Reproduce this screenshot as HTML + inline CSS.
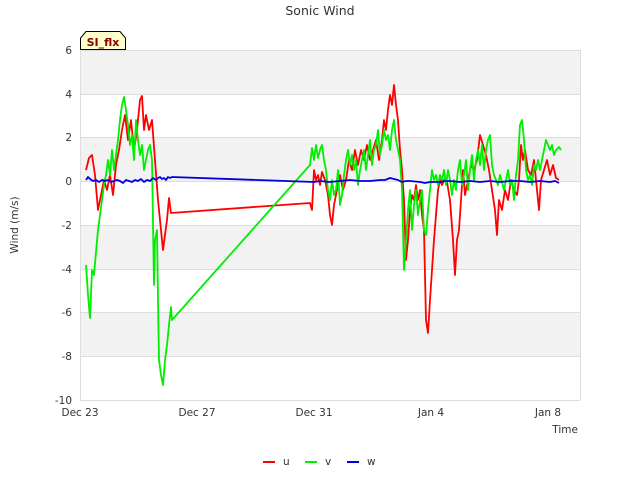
<!DOCTYPE html>
<html><head><meta charset="utf-8"><style>
body{margin:0;background:#fff;}
svg{display:block;font-family:"DejaVu Sans","Liberation Sans",sans-serif;}
</style></head><body>
<svg width="640" height="480" viewBox="0 0 640 480">
<rect width="640" height="480" fill="#fff"/>
<text x="320" y="15" font-size="12.5" fill="#333" text-anchor="middle">Sonic Wind</text>
<g>
<rect x="80" y="50" width="500" height="44" fill="#f2f2f2"/>
<rect x="80" y="137" width="500" height="44" fill="#f2f2f2"/>
<rect x="80" y="225" width="500" height="44" fill="#f2f2f2"/>
<rect x="80" y="312" width="500" height="44" fill="#f2f2f2"/>
</g>
<g stroke="#ddd" stroke-width="1">
<line x1="80" y1="50.5" x2="580" y2="50.5"/><line x1="80" y1="94.5" x2="580" y2="94.5"/>
<line x1="80" y1="137.5" x2="580" y2="137.5"/><line x1="80" y1="181.5" x2="580" y2="181.5"/>
<line x1="80" y1="225.5" x2="580" y2="225.5"/><line x1="80" y1="269.5" x2="580" y2="269.5"/>
<line x1="80" y1="312.5" x2="580" y2="312.5"/><line x1="80" y1="356.5" x2="580" y2="356.5"/>
<line x1="80.5" y1="50" x2="80.5" y2="400"/><line x1="580.5" y1="50" x2="580.5" y2="400"/>
<line x1="80" y1="400.5" x2="580" y2="400.5"/>
</g>
<g font-size="10.5" fill="#333" text-anchor="end">
<text x="72" y="54">6</text><text x="72" y="98">4</text><text x="72" y="141">2</text>
<text x="72" y="185">0</text><text x="72" y="229">-2</text><text x="72" y="273">-4</text>
<text x="72" y="316">-6</text><text x="72" y="360">-8</text><text x="72" y="404">-10</text>
</g>
<g font-size="10.5" fill="#333" text-anchor="middle">
<text x="80" y="416">Dec 23</text><text x="197" y="416">Dec 27</text><text x="314" y="416">Dec 31</text>
<text x="431" y="416">Jan 4</text><text x="548" y="416">Jan 8</text>
</g>
<text x="578" y="433" font-size="10.5" fill="#333" text-anchor="end">Time</text>
<text x="18" y="225" font-size="10.5" fill="#333" text-anchor="middle" transform="rotate(-90 18 225)">Wind (m/s)</text>
<g fill="none" stroke-width="1.8" stroke-linejoin="round">
<polyline stroke="#ff0000" points="86,170 89,158 92,155 95,175 98,210 101,195 104,180 107,190 110,175 113,195 116,165 119,150 122,130 125,115 128,140 131,120 134,150 137,130 140,100 142,96 144,130 146,115 149,130 152,120 155,160 158,200 161,230 163,250 165,235 167,220 169,198 171,213 310,203 312,210 314,170 316,180 318,175 320,185 322,172 325,180 328,195 330,215 332,225 334,205 337,190 340,175 343,190 346,180 349,160 352,170 355,150 358,165 361,150 364,160 367,145 370,160 373,150 376,140 379,160 382,140 384,120 386,130 388,110 390,95 392,105 394,85 396,105 398,120 400,150 402,170 404,200 406,260 408,240 410,210 412,195 414,200 416,185 418,200 420,190 422,215 424,230 426,320 428,333 430,300 432,270 434,240 436,215 438,190 440,180 442,185 444,180 447,182 450,200 453,240 455,275 457,240 459,230 461,200 463,170 465,195 468,180 471,165 474,170 477,160 480,135 483,145 486,155 489,170 492,190 495,210 497,235 499,200 502,210 505,190 508,200 511,180 514,190 517,195 519,180 521,145 523,160 525,150 528,170 531,175 534,160 537,190 539,210 541,180 544,170 547,160 550,175 553,165 556,178 559,180"/>
<polyline stroke="#00ee00" points="86,265 88,295 90,318 92,270 94,275 96,252 98,230 100,215 102,200 104,185 106,175 108,160 110,175 112,150 114,170 116,155 118,140 120,120 122,105 124,97 126,110 128,125 130,145 132,135 134,160 136,120 138,140 140,155 142,145 144,170 146,160 148,150 150,145 152,160 154,285 155,240 157,230 158,300 159,360 161,375 163,385 165,360 167,345 169,325 171,307 172,320 310,165 312,148 314,160 316,145 318,158 320,150 322,145 324,160 326,170 328,190 330,200 332,180 334,195 336,190 338,170 340,205 342,195 344,175 346,160 348,150 350,165 352,155 354,170 356,160 358,185 360,170 362,160 364,150 366,170 368,155 370,140 372,165 374,150 376,145 378,130 380,155 382,145 384,130 386,140 388,135 390,150 392,130 394,120 396,140 398,150 400,160 402,190 404,270 406,240 408,210 410,190 412,230 414,205 416,190 418,215 420,200 422,190 424,230 426,235 428,210 430,190 432,170 434,180 436,175 438,185 440,175 442,180 444,170 446,185 448,170 450,180 452,195 454,180 456,190 458,170 460,160 462,185 464,175 466,160 468,190 470,170 472,155 474,180 476,160 478,150 480,165 482,145 484,170 486,150 488,140 490,135 492,165 494,175 496,180 498,185 500,175 502,182 504,190 506,180 508,170 510,185 512,180 514,200 516,175 518,160 520,125 522,120 524,140 526,170 528,180 530,175 532,185 534,165 536,170 538,160 540,170 542,160 544,150 546,140 548,145 550,150 552,145 554,155 556,150 559,147 561,150"/>
<polyline stroke="#0000dd" points="86,180 88,177 90,179 93,181 96,180 99,182 102,180 105,181 108,180 111,182 114,181 117,180 120,181 123,183 126,180 129,181 132,182 135,180 138,181 141,179 144,182 147,180 150,181 153,178 156,180 158,178 160,177 162,179 164,178 166,180 168,177 170,178 172,177 314,182 320,181 330,182 340,181 350,180 360,181 370,181 380,180 385,180 390,178 394,179 398,180 402,182 406,181 410,181 420,182 425,183 430,182 440,182 445,181 450,181 460,182 470,181 480,182 490,181 500,182 510,181 520,181 530,182 540,181 550,182 555,181 559,183"/>
</g>
<path d="M80.5,49.5 V38 L86,31.5 H120 L125.5,38 V49.5 Z" fill="#ffffcc" stroke="#000" stroke-width="1"/>
<text x="103" y="46" font-size="11" font-weight="bold" fill="#8b0000" text-anchor="middle">SI_flx</text>
<g font-size="10.5" fill="#333">
<line x1="263" y1="462" x2="275" y2="462" stroke="#ff0000" stroke-width="2"/>
<text x="283" y="465">u</text>
<line x1="305" y1="462" x2="317" y2="462" stroke="#00ee00" stroke-width="2"/>
<text x="325" y="465">v</text>
<line x1="347" y1="462" x2="359" y2="462" stroke="#0000dd" stroke-width="2"/>
<text x="367" y="465">w</text>
</g>
</svg>
</body></html>
